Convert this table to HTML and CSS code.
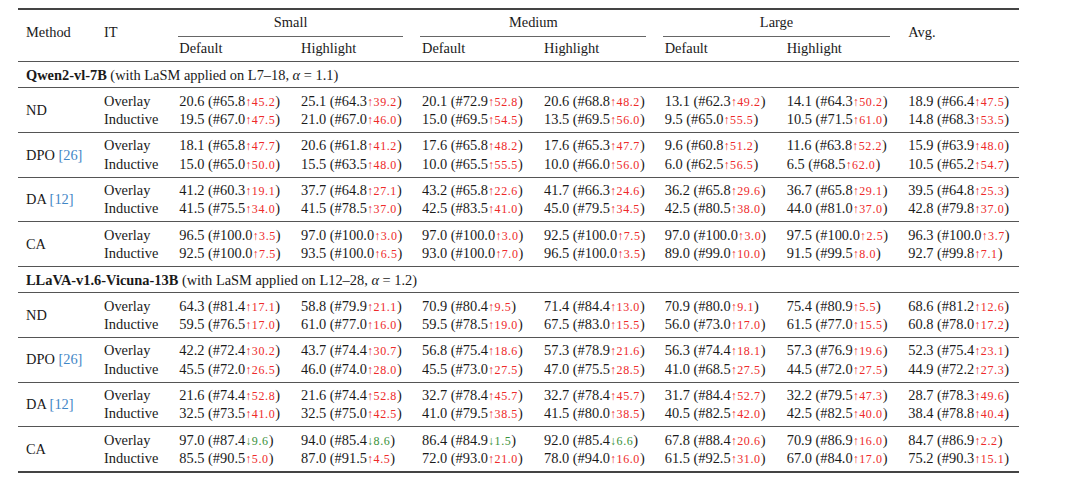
FILE: index.html
```html
<!DOCTYPE html>
<html>
<head>
<meta charset="utf-8">
<link rel="stylesheet" href="styles.css">
</head>
<body>
<div class="wrap">
<table class="res">
<colgroup>
<col style="width:86px"><col style="width:75.3px"><col style="width:121.7px"><col style="width:121px"><col style="width:122px"><col style="width:120.7px"><col style="width:122px"><col style="width:121.6px"><col style="width:110.7px">
</colgroup>
<thead>
<tr class="h1">
<th rowspan="2" class="rs first">Method</th>
<th rowspan="2" class="rs">IT</th>
<th colspan="2"><div class="grp">Small</div></th>
<th colspan="2"><div class="grp">Medium</div></th>
<th colspan="2"><div class="grp">Large</div></th>
<th rowspan="2" class="rs">Avg.</th>
</tr>
<tr class="h2">
<th>Default</th><th>Highlight</th><th>Default</th><th>Highlight</th><th>Default</th><th>Highlight</th>
</tr>
</thead>
<tbody>
<tr class="title"><td colspan="9"><b>Qwen2-vl-7B</b> (with LaSM applied on L7–18, <i>α</i> = 1.1)</td></tr>

<tr class="g1"><td rowspan="2" class="m">ND</td><td>Overlay</td>
<td>20.6 (#65.8<span class="up">↑45.2</span>)</td><td>25.1 (#64.3<span class="up">↑39.2</span>)</td><td>20.1 (#72.9<span class="up">↑52.8</span>)</td><td>20.6 (#68.8<span class="up">↑48.2</span>)</td><td>13.1 (#62.3<span class="up">↑49.2</span>)</td><td>14.1 (#64.3<span class="up">↑50.2</span>)</td><td>18.9 (#66.4<span class="up">↑47.5</span>)</td></tr>
<tr class="g2"><td>Inductive</td>
<td>19.5 (#67.0<span class="up">↑47.5</span>)</td><td>21.0 (#67.0<span class="up">↑46.0</span>)</td><td>15.0 (#69.5<span class="up">↑54.5</span>)</td><td>13.5 (#69.5<span class="up">↑56.0</span>)</td><td>9.5 (#65.0<span class="up">↑55.5</span>)</td><td>10.5 (#71.5<span class="up">↑61.0</span>)</td><td>14.8 (#68.3<span class="up">↑53.5</span>)</td></tr>

<tr class="g1"><td rowspan="2" class="m">DPO <span class="cite">[26]</span></td><td>Overlay</td>
<td>18.1 (#65.8<span class="up">↑47.7</span>)</td><td>20.6 (#61.8<span class="up">↑41.2</span>)</td><td>17.6 (#65.8<span class="up">↑48.2</span>)</td><td>17.6 (#65.3<span class="up">↑47.7</span>)</td><td>9.6 (#60.8<span class="up">↑51.2</span>)</td><td>11.6 (#63.8<span class="up">↑52.2</span>)</td><td>15.9 (#63.9<span class="up">↑48.0</span>)</td></tr>
<tr class="g2"><td>Inductive</td>
<td>15.0 (#65.0<span class="up">↑50.0</span>)</td><td>15.5 (#63.5<span class="up">↑48.0</span>)</td><td>10.0 (#65.5<span class="up">↑55.5</span>)</td><td>10.0 (#66.0<span class="up">↑56.0</span>)</td><td>6.0 (#62.5<span class="up">↑56.5</span>)</td><td>6.5 (#68.5<span class="up">↑62.0</span>)</td><td>10.5 (#65.2<span class="up">↑54.7</span>)</td></tr>

<tr class="g1"><td rowspan="2" class="m">DA <span class="cite">[12]</span></td><td>Overlay</td>
<td>41.2 (#60.3<span class="up">↑19.1</span>)</td><td>37.7 (#64.8<span class="up">↑27.1</span>)</td><td>43.2 (#65.8<span class="up">↑22.6</span>)</td><td>41.7 (#66.3<span class="up">↑24.6</span>)</td><td>36.2 (#65.8<span class="up">↑29.6</span>)</td><td>36.7 (#65.8<span class="up">↑29.1</span>)</td><td>39.5 (#64.8<span class="up">↑25.3</span>)</td></tr>
<tr class="g2"><td>Inductive</td>
<td>41.5 (#75.5<span class="up">↑34.0</span>)</td><td>41.5 (#78.5<span class="up">↑37.0</span>)</td><td>42.5 (#83.5<span class="up">↑41.0</span>)</td><td>45.0 (#79.5<span class="up">↑34.5</span>)</td><td>42.5 (#80.5<span class="up">↑38.0</span>)</td><td>44.0 (#81.0<span class="up">↑37.0</span>)</td><td>42.8 (#79.8<span class="up">↑37.0</span>)</td></tr>

<tr class="g1"><td rowspan="2" class="m">CA</td><td>Overlay</td>
<td>96.5 (#100.0<span class="up">↑3.5</span>)</td><td>97.0 (#100.0<span class="up">↑3.0</span>)</td><td>97.0 (#100.0<span class="up">↑3.0</span>)</td><td>92.5 (#100.0<span class="up">↑7.5</span>)</td><td>97.0 (#100.0<span class="up">↑3.0</span>)</td><td>97.5 (#100.0<span class="up">↑2.5</span>)</td><td>96.3 (#100.0<span class="up">↑3.7</span>)</td></tr>
<tr class="g2"><td>Inductive</td>
<td>92.5 (#100.0<span class="up">↑7.5</span>)</td><td>93.5 (#100.0<span class="up">↑6.5</span>)</td><td>93.0 (#100.0<span class="up">↑7.0</span>)</td><td>96.5 (#100.0<span class="up">↑3.5</span>)</td><td>89.0 (#99.0<span class="up">↑10.0</span>)</td><td>91.5 (#99.5<span class="up">↑8.0</span>)</td><td>92.7 (#99.8<span class="up">↑7.1</span>)</td></tr>

<tr class="title"><td colspan="9"><b>LLaVA-v1.6-Vicuna-13B</b> (with LaSM applied on L12–28, <i>α</i> = 1.2)</td></tr>

<tr class="g1"><td rowspan="2" class="m">ND</td><td>Overlay</td>
<td>64.3 (#81.4<span class="up">↑17.1</span>)</td><td>58.8 (#79.9<span class="up">↑21.1</span>)</td><td>70.9 (#80.4<span class="up">↑9.5</span>)</td><td>71.4 (#84.4<span class="up">↑13.0</span>)</td><td>70.9 (#80.0<span class="up">↑9.1</span>)</td><td>75.4 (#80.9<span class="up">↑5.5</span>)</td><td>68.6 (#81.2<span class="up">↑12.6</span>)</td></tr>
<tr class="g2"><td>Inductive</td>
<td>59.5 (#76.5<span class="up">↑17.0</span>)</td><td>61.0 (#77.0<span class="up">↑16.0</span>)</td><td>59.5 (#78.5<span class="up">↑19.0</span>)</td><td>67.5 (#83.0<span class="up">↑15.5</span>)</td><td>56.0 (#73.0<span class="up">↑17.0</span>)</td><td>61.5 (#77.0<span class="up">↑15.5</span>)</td><td>60.8 (#78.0<span class="up">↑17.2</span>)</td></tr>

<tr class="g1"><td rowspan="2" class="m">DPO <span class="cite">[26]</span></td><td>Overlay</td>
<td>42.2 (#72.4<span class="up">↑30.2</span>)</td><td>43.7 (#74.4<span class="up">↑30.7</span>)</td><td>56.8 (#75.4<span class="up">↑18.6</span>)</td><td>57.3 (#78.9<span class="up">↑21.6</span>)</td><td>56.3 (#74.4<span class="up">↑18.1</span>)</td><td>57.3 (#76.9<span class="up">↑19.6</span>)</td><td>52.3 (#75.4<span class="up">↑23.1</span>)</td></tr>
<tr class="g2"><td>Inductive</td>
<td>45.5 (#72.0<span class="up">↑26.5</span>)</td><td>46.0 (#74.0<span class="up">↑28.0</span>)</td><td>45.5 (#73.0<span class="up">↑27.5</span>)</td><td>47.0 (#75.5<span class="up">↑28.5</span>)</td><td>41.0 (#68.5<span class="up">↑27.5</span>)</td><td>44.5 (#72.0<span class="up">↑27.5</span>)</td><td>44.9 (#72.2<span class="up">↑27.3</span>)</td></tr>

<tr class="g1"><td rowspan="2" class="m">DA <span class="cite">[12]</span></td><td>Overlay</td>
<td>21.6 (#74.4<span class="up">↑52.8</span>)</td><td>21.6 (#74.4<span class="up">↑52.8</span>)</td><td>32.7 (#78.4<span class="up">↑45.7</span>)</td><td>32.7 (#78.4<span class="up">↑45.7</span>)</td><td>31.7 (#84.4<span class="up">↑52.7</span>)</td><td>32.2 (#79.5<span class="up">↑47.3</span>)</td><td>28.7 (#78.3<span class="up">↑49.6</span>)</td></tr>
<tr class="g2"><td>Inductive</td>
<td>32.5 (#73.5<span class="up">↑41.0</span>)</td><td>32.5 (#75.0<span class="up">↑42.5</span>)</td><td>41.0 (#79.5<span class="up">↑38.5</span>)</td><td>41.5 (#80.0<span class="up">↑38.5</span>)</td><td>40.5 (#82.5<span class="up">↑42.0</span>)</td><td>42.5 (#82.5<span class="up">↑40.0</span>)</td><td>38.4 (#78.8<span class="up">↑40.4</span>)</td></tr>

<tr class="g1"><td rowspan="2" class="m">CA</td><td>Overlay</td>
<td>97.0 (#87.4<span class="dn">↓9.6</span>)</td><td>94.0 (#85.4<span class="dn">↓8.6</span>)</td><td>86.4 (#84.9<span class="dn">↓1.5</span>)</td><td>92.0 (#85.4<span class="dn">↓6.6</span>)</td><td>67.8 (#88.4<span class="up">↑20.6</span>)</td><td>70.9 (#86.9<span class="up">↑16.0</span>)</td><td>84.7 (#86.9<span class="up">↑2.2</span>)</td></tr>
<tr class="g2"><td>Inductive</td>
<td>85.5 (#90.5<span class="up">↑5.0</span>)</td><td>87.0 (#91.5<span class="up">↑4.5</span>)</td><td>72.0 (#93.0<span class="up">↑21.0</span>)</td><td>78.0 (#94.0<span class="up">↑16.0</span>)</td><td>61.5 (#92.5<span class="up">↑31.0</span>)</td><td>67.0 (#84.0<span class="up">↑17.0</span>)</td><td>75.2 (#90.3<span class="up">↑15.1</span>)</td></tr>
</tbody>
</table>
</div>
</body>
</html>
```
FILE: styles.css
```css
html, body {
  margin: 0;
  background: #ffffff;
}
body {
  font-family: "Liberation Serif", "Times New Roman", serif;
  font-size: 14.4px;
  color: #1a1a1a;
}
.wrap {
  padding: 8px 0 0 18px;
}
.res {
  border-collapse: separate;
  border-spacing: 0;
  table-layout: fixed;
  width: 1001px;
  border-top: 2px solid #444;
  border-bottom: 2px solid #444;
}
.res th, .res td {
  padding: 0;
  line-height: 18.3px;
  text-align: left;
  font-weight: normal;
  white-space: nowrap;
  vertical-align: top;
}
.res .first, .res .m {
  padding-left: 8px;
}
.h1 th {
  padding-top: 3px;
}
.h1 th.rs {
  padding-top: 13.4px;
}
.grp {
  text-align: center;
  padding-bottom: 4.5px;
  border-bottom: 1px solid #666;
  margin: 0 18.5px 0 -1.5px;
}
.h2 th {
  padding-top: 2.5px;
  padding-bottom: 3.6px;
}
.title td {
  border-top: 1px solid #555;
  padding: 4.3px 0 2.5px 8px;
}
.title b {
  font-weight: bold;
}
.g1 td {
  border-top: 1px solid #555;
  padding-top: 3.5px;
}
.g2 td {
  padding-bottom: 3.6px;
}
.res td.m {
  vertical-align: middle;
  padding-bottom: 3.6px;
}
.up, .dn {
  font-size: 12px;
  line-height: 1;
  letter-spacing: 0.6px;
}
.up {
  color: #ee2a2a;
}
.dn {
  color: #3a923a;
}
.cite {
  color: #3f86c6;
}
```
